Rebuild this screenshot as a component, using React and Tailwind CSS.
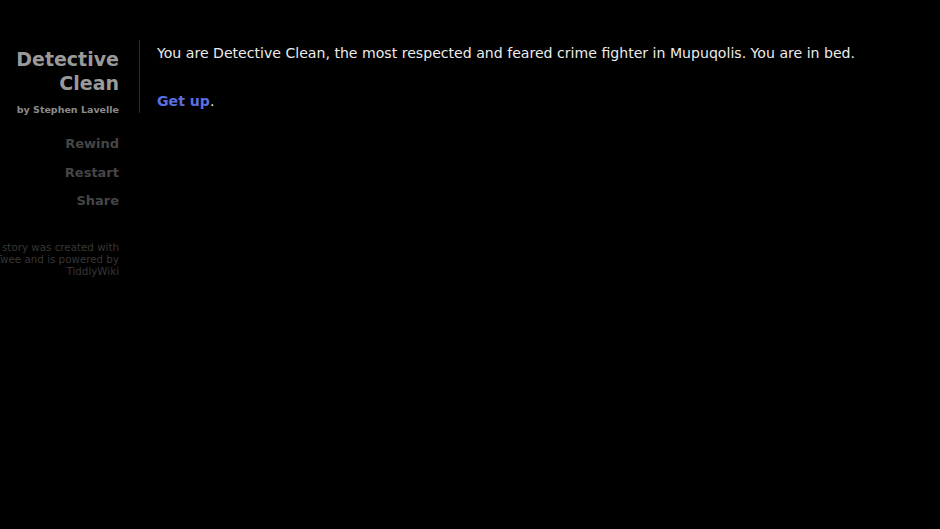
import React from "react";

const font = { fontFamily: '"DejaVu Sans", Verdana, sans-serif' };

const Sidebar = () => (
  <div className="shrink-0 w-[180px] ml-[-61px] pt-[47px] text-right">
    <h1 className="text-[19px] leading-[24px] font-bold text-[#9a9a9a]">
      Detective
      <br />
      Clean
    </h1>
    <p className="mt-[8px] text-[9.5px] font-bold text-[#8a8a8a]">by Stephen Lavelle</p>
    <ul className="mt-[18px] space-y-[11px] text-[13px] leading-[17.5px] font-bold text-[#464646]">
      <li>Rewind</li>
      <li>Restart</li>
      <li>Share</li>
    </ul>
    <p className="mt-[31px] text-[10.3px] leading-[12px] text-[#373737]">
      This story was created with
      <br />
      Twee and is powered by
      <br />
      TiddlyWiki
    </p>
  </div>
);

export default function App() {
  return (
    <div className="w-[940px] h-[529px] overflow-hidden bg-black flex" style={font}>
      <Sidebar />
      <main className="ml-[20px] mt-[40px] self-start border-l border-[#2a2a2a] pl-[17px] pr-4">
        <p className="text-[14.1px] leading-[24px] text-[#ececec] pt-[1px]">
          You are Detective Clean, the most respected and feared crime fighter in Mupuqolis. You are in bed.
        </p>
        <p className="mt-[24px] text-[14.1px] leading-[24px] text-[#ececec]">
          <a className="font-bold text-[#5b6fe0]">Get up</a>.
        </p>
      </main>
    </div>
  );
}
